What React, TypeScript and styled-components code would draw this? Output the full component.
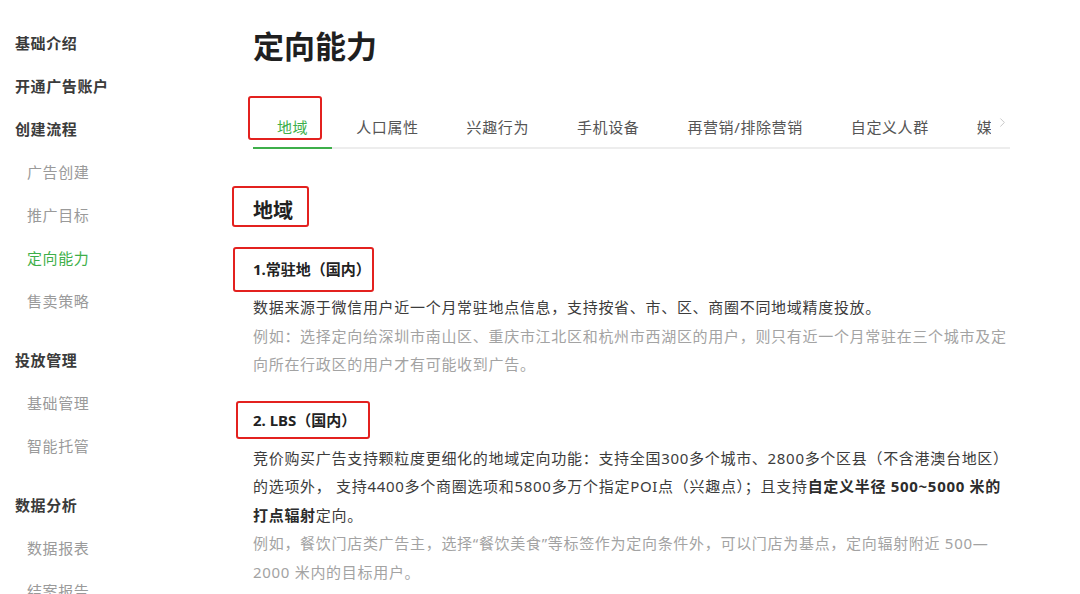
import styled, { createGlobalStyle } from "styled-components";
import { ChevronRight } from "lucide-react";

const GlobalStyle = createGlobalStyle`
  html, body {
    margin: 0;
    padding: 0;
    background: #fff;
    overflow: hidden;
  }
  body {
    font-family: "Noto Sans", "Noto Sans CJK SC", sans-serif;
    color: #3c3c3c;
  }
  * { box-sizing: border-box; }
`;

type MenuItem = { label: string; sub?: boolean; active?: boolean };

const menuGroups: MenuItem[][] = [
  [
    { label: "基础介绍" },
    { label: "开通广告账户" },
    { label: "创建流程" },
    { label: "广告创建", sub: true },
    { label: "推广目标", sub: true },
    { label: "定向能力", sub: true, active: true },
    { label: "售卖策略", sub: true },
  ],
  [
    { label: "投放管理" },
    { label: "基础管理", sub: true },
    { label: "智能托管", sub: true },
  ],
  [
    { label: "数据分析" },
    { label: "数据报表", sub: true },
    { label: "结案报告", sub: true },
  ],
];

const tabs = [
  "地域",
  "人口属性",
  "兴趣行为",
  "手机设备",
  "再营销/排除营销",
  "自定义人群",
  "媒体类别",
];

function App() {
  return (
    <>
      <GlobalStyle />
      <Page>
        <Sidebar>
          {menuGroups.map((group, gi) => (
            <MenuGroup key={gi}>
              {group.map((item) => (
                <MenuLink key={item.label} $sub={item.sub} $active={item.active}>
                  {item.label}
                </MenuLink>
              ))}
            </MenuGroup>
          ))}
        </Sidebar>

        <Main>
          <Title>定向能力</Title>

          <TabBar>
            <TabScroller>
              {tabs.map((t, i) =>
                i === 0 ? (
                  <Tab key={t} $active>
                    <Mark $top={-6} $right={10} $bottom={7} $left={-5} />
                    {t}
                  </Tab>
                ) : (
                  <Tab key={t}>{t}</Tab>
                )
              )}
            </TabScroller>
            <MoreButton type="button">
              <ChevronRight size={15} strokeWidth={1.5} />
            </MoreButton>
          </TabBar>

          <SectionTitle>
            <Highlight>
              地域
              <Mark $top={-10} $right={-16} $bottom={-1} $left={-21} />
            </Highlight>
          </SectionTitle>

          <SubTitle $gap={30}>
            <Highlight>
              1.常驻地（国内）
              <Mark $top={-9} $right={-3} $bottom={-10} $left={-20} />
            </Highlight>
          </SubTitle>
          <Text>
            数据来源于微信用户近一个月常驻地点信息，支持按省、市、区、商圈不同地域精度投放。
          </Text>
          <Text $muted>
            例如：选择定向给深圳市南山区、重庆市江北区和杭州市西湖区的用户，则只有近一个月常驻在三个城市及定向所在行政区的用户才有可能收到广告。
          </Text>

          <SubTitle $gap={28}>
            <Highlight>
              2. LBS（国内）
              <Mark $top={-6} $right={-14} $bottom={-6} $left={-17} />
            </Highlight>
          </SubTitle>
          <Text>
            竞价购买广告支持颗粒度更细化的地域定向功能：支持全国300多个城市、2800多个区县（不含港澳台地区）的选项外，
            支持4400多个商圈选项和5800多万个指定POI点（兴趣点）；且支持
            <strong>自定义半径 500~5000 米的打点辐射</strong>定向。
          </Text>
          <Text $muted>
            例如，餐饮门店类广告主，选择“餐饮美食”等标签作为定向条件外，可以门店为基点，定向辐射附近 500—2000 米内的目标用户。
          </Text>
        </Main>
      </Page>
    </>
  );
}

export default App;

const Page = styled.div`
  display: flex;
  width: 1080px;
  min-height: 594px;
`;

const Sidebar = styled.nav`
  width: 253px;
  flex: none;
  padding: 22px 0 0 15px;
  display: flex;
  flex-direction: column;
  row-gap: 16px;
`;

const MenuGroup = styled.div`
  display: flex;
  flex-direction: column;
`;

const MenuLink = styled.a<{ $sub?: boolean; $active?: boolean }>`
  display: block;
  height: 43px;
  line-height: 43px;
  font-size: 15px;
  letter-spacing: 0.6px;
  padding-left: ${(p) => (p.$sub ? "12px" : "0")};
  font-weight: ${(p) => (p.$sub ? 400 : 700)};
  color: ${(p) => (p.$active ? "#3eaf4a" : p.$sub ? "#9a9a9a" : "#3b3b3b")};
  cursor: pointer;
`;

const Main = styled.main`
  width: 757px;
  padding-top: 24px;
`;

const Title = styled.h1`
  margin: 0;
  font-size: 31px;
  line-height: 44px;
  font-weight: 700;
  color: #1f1f1f;
`;

const TabBar = styled.div`
  margin-top: 34px;
  display: flex;
  border-bottom: 2px solid #ededed;
`;

/* extra room on top/left so the annotation box is not clipped */
const TabScroller = styled.div`
  display: flex;
  width: 749px;
  overflow: hidden;
  padding: 8px 0 0 6px;
  margin: -8px 0 -2px -6px;
`;

const Tab = styled.div<{ $active?: boolean }>`
  position: relative;
  flex: none;
  height: 47px;
  padding: 3px 24px 0;
  display: flex;
  align-items: center;
  font-size: 15px;
  letter-spacing: 0.6px;
  color: ${(p) => (p.$active ? "#3eaf4a" : "#555")};
  border-bottom: 2px solid ${(p) => (p.$active ? "#3eaf4a" : "transparent")};
  cursor: pointer;
`;

const MoreButton = styled.button`
  flex: 1;
  border: none;
  background: transparent;
  padding: 13px 0 0 4px;
  align-self: flex-start;
  display: flex;
  color: #c4c4c4;
  cursor: pointer;
`;

const Mark = styled.span<{
  $top: number;
  $right: number;
  $bottom: number;
  $left: number;
}>`
  position: absolute;
  top: ${(p) => p.$top}px;
  right: ${(p) => p.$right}px;
  bottom: ${(p) => p.$bottom}px;
  left: ${(p) => p.$left}px;
  border: 2.5px solid #e3211f;
  border-radius: 3px;
  pointer-events: none;
`;

const Highlight = styled.span`
  position: relative;
  display: inline-block;
`;

const SectionTitle = styled.h2`
  margin: 47px 0 0;
  font-size: 20px;
  line-height: 30px;
  font-weight: 700;
  color: #222;
`;

const SubTitle = styled.h3<{ $gap: number }>`
  margin: ${(p) => p.$gap}px 0 11px;
  font-size: 15px;
  line-height: 26px;
  font-weight: 700;
  color: #222;
`;

const Text = styled.p<{ $muted?: boolean }>`
  margin: 0;
  font-size: 15px;
  letter-spacing: 0.7px;
  line-height: 28.5px;
  color: ${(p) => (p.$muted ? "#a3a3a3" : "#3c3c3c")};

  strong {
    font-weight: 700;
    color: #2c2c2c;
  }
`;
